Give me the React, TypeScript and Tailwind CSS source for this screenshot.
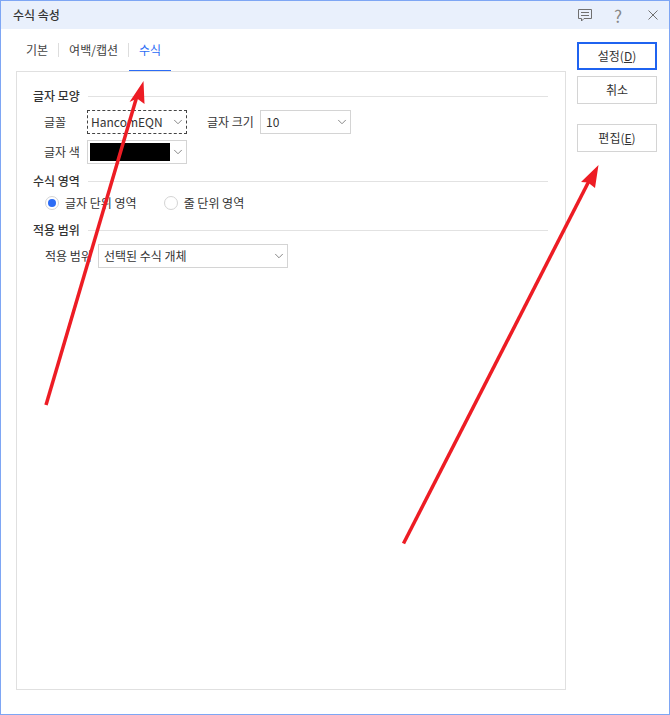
import React from 'react';
import { ChevronDown } from 'lucide-react';

const font = 'font-["Noto_Sans_CJK_KR","Noto_Sans",sans-serif]';

const Select: React.FC<{ className: string; children?: React.ReactNode }> = ({ className, children }) => (
    <div className={`flex items-center justify-between h-6 border ${className}`}>
        {children}
        <ChevronDown className="w-[14px] h-[14px] mr-px text-[#777] shrink-0" strokeWidth={1.5} />
    </div>
);

const Section: React.FC<{ title: string; children: React.ReactNode }> = ({ title, children }) => (
    <div>
        <div className="flex items-center h-5">
            <span className="text-xs font-medium text-[#333] leading-none">{title}</span>
            <div className="flex-1 h-px bg-[#e2e2e2] ml-2" />
        </div>
        {children}
    </div>
);

const Radio: React.FC<{ checked?: boolean; label: string }> = ({ checked, label }) => (
    <div className="flex items-center gap-[6px]">
        <span className="flex items-center justify-center w-[14px] h-[14px] rounded-full border border-[#d4d4d4] bg-white">
            {checked && <span className="w-2 h-2 rounded-full bg-[#2c6cf5]" />}
        </span>
        <span className="text-xs text-[#333]">{label}</span>
    </div>
);

const SideButton: React.FC<{ primary?: boolean; className?: string; children: React.ReactNode }> = ({ primary, className, children }) => (
    <button className={`w-20 h-7 flex items-center justify-center text-xs text-[#333] bg-white ${primary ? 'border-2 border-[#1f63f0]' : 'border border-[#d4d4d4]'} ${className ?? ''}`}>
        {children}
    </button>
);

const App: React.FC = () => {
    return (
        <div className={`relative w-[670px] h-[715px] bg-white border border-[#7ea6f4] overflow-hidden ${font}`}>
            {/* title bar */}
            <div className="flex items-center justify-between h-[28px] bg-[#e9f0fc] pl-3 pr-[11px]">
                <span className="text-xs font-medium text-[#333]">수식 속성</span>
                <div className="flex items-center text-[#707070]">
                    <svg width="14" height="13" viewBox="0 0 14 13" fill="none" stroke="currentColor" strokeWidth="1">
                        <path d="M0.5 0.5H13.5V9.5H6L3.5 12V9.5H0.5Z" />
                        <path d="M3 3.5H11M3 6.5H11" />
                    </svg>
                    <span className="ml-[22px] text-[17px] leading-none text-[#888]">?</span>
                    <svg className="ml-[26px]" width="10" height="10" viewBox="0 0 10 10" fill="none" stroke="currentColor" strokeWidth="1">
                        <path d="M0.5 0.5L9.5 9.5M9.5 0.5L0.5 9.5" />
                    </svg>
                </div>
            </div>

            <div className="flex pl-[15px] pr-3">
                {/* left column */}
                <div className="w-[550px] mr-[11px]">
                    <div className="flex items-center h-[42px] pl-[10px] text-xs text-[#444]">
                        <span className="pr-[10px]">기본</span>
                        <span className="w-px h-[14px] bg-[#ddd]" />
                        <span className="px-[10px]">여백/캡션</span>
                        <span className="w-px h-[14px] bg-[#ddd]" />
                        <span className="relative h-full flex items-center px-[10px] text-[#2c6cf5]">
                            수식
                            <span className="absolute left-0 right-0 bottom-0 h-[1px] bg-[#2c6cf5]" />
                        </span>
                    </div>
                    <div className="h-[619px] border border-[#e0e0e0] pt-[14px] pl-4 pr-[17px]">
                        <Section title="글자 모양">
                            <div className="flex items-center mt-[4px] h-[24px]">
                                <span className="w-[54px] pl-[11px] text-xs text-[#333]">글꼴</span>
                                <Select className="w-[100px] border-dashed border-[#444]">
                                    <span className="pl-[3px] text-xs text-[#333]">HancomEQN</span>
                                </Select>
                                <span className="ml-[20px] w-[53px] text-xs text-[#333]">글자 크기</span>
                                <Select className="w-[91px] border-[#d4d4d4]">
                                    <span className="pl-[5px] text-xs text-[#333]">10</span>
                                </Select>
                            </div>
                            <div className="flex items-center mt-[6px] h-[24px]">
                                <span className="w-[54px] pl-[11px] text-xs text-[#333]">글자 색</span>
                                <Select className="w-[100px] border-[#d4d4d4]">
                                    <span className="ml-[2px] w-[80px] h-[18px] bg-black shrink-0" />
                                </Select>
                            </div>
                        </Section>
                        <div className="mt-[7px]">
                            <Section title="수식 영역">
                                <div className="flex items-center gap-[27px] pl-[12px] h-[24px]">
                                    <Radio checked label="글자 단위 영역" />
                                    <Radio label="줄 단위 영역" />
                                </div>
                            </Section>
                        </div>
                        <div className="mt-[5px]">
                            <Section title="적용 범위">
                                <div className="flex items-center mt-[4px] h-[24px]">
                                    <span className="w-[65px] pl-[12px] text-xs text-[#333]">적용 범위</span>
                                    <Select className="w-[190px] border-[#d4d4d4]">
                                        <span className="pl-[5px] text-xs text-[#333]">선택된 수식 개체</span>
                                    </Select>
                                </div>
                            </Section>
                        </div>
                    </div>
                </div>

                {/* buttons */}
                <div className="pt-[13px] flex flex-col">
                    <SideButton primary>설정(<span className="underline">D</span>)</SideButton>
                    <SideButton className="mt-[6px]">취소</SideButton>
                    <SideButton className="mt-[20px]">편집(<span className="underline">E</span>)</SideButton>
                </div>
            </div>

            {/* annotation arrows */}
            <svg className="absolute -left-px -top-px pointer-events-none" width="670" height="715">
                <line x1="46" y1="405" x2="137" y2="96" stroke="#ed1c24" strokeWidth="3.5" />
                <polygon points="143.5,81 144.5,104 137,98.5 129.5,102" fill="#ed1c24" />
                <line x1="403.5" y1="543.5" x2="589" y2="181" stroke="#ed1c24" strokeWidth="3.5" />
                <polygon points="598.5,165 595,188 588,182.5 581,182" fill="#ed1c24" />
            </svg>
        </div>
    );
};

export default App;
